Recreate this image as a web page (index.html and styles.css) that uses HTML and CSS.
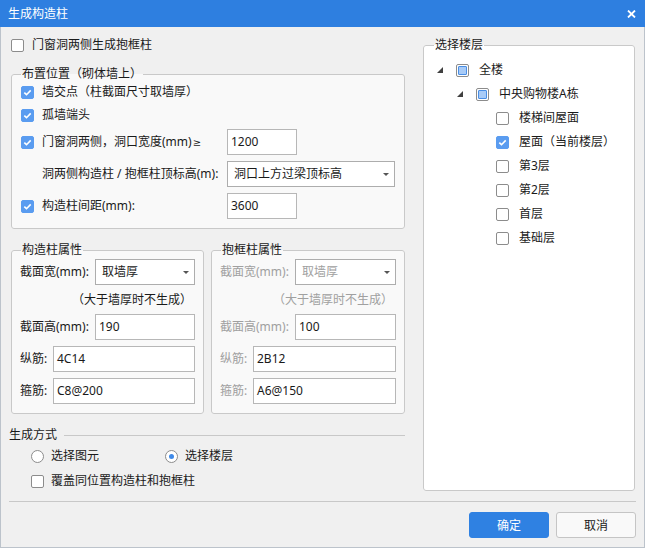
FILE: index.html
```html
<!DOCTYPE html>
<html lang="zh-CN">
<head>
<meta charset="utf-8">
<title>生成构造柱</title>
<link rel="stylesheet" href="styles.css">
</head>
<body>
<div class="titlebar">
  <span class="title">生成构造柱</span>
  <svg class="close" width="9" height="8" viewBox="0 0 9 8"><path d="M1 0.5 L8 7.5 M8 0.5 L1 7.5" stroke="#fff" stroke-width="1.8" fill="none"/></svg>
</div>
<div class="dlg">
  <div class="main">
    <div class="left">
      <div class="crow top-row"><span class="cb"></span><span>门窗洞两侧生成抱框柱</span></div>

      <fieldset class="group g-layout">
        <legend>布置位置（砌体墙上）</legend>
        <div class="lrow r1"><div class="lcell"><span class="cb on"><svg viewBox="0 0 13 13"><path d="M3.3 6.6 L5.5 8.7 L9.7 4.4" stroke="#fff" stroke-width="1.6" fill="none"/></svg></span><span>墙交点（柱截面尺寸取墙厚）</span></div></div>
        <div class="lrow r2"><div class="lcell"><span class="cb on"><svg viewBox="0 0 13 13"><path d="M3.3 6.6 L5.5 8.7 L9.7 4.4" stroke="#fff" stroke-width="1.6" fill="none"/></svg></span><span>孤墙端头</span></div></div>
        <div class="lrow r3"><div class="lcell"><span class="cb on"><svg viewBox="0 0 13 13"><path d="M3.3 6.6 L5.5 8.7 L9.7 4.4" stroke="#fff" stroke-width="1.6" fill="none"/></svg></span><span>门窗洞两侧，洞口宽度(mm)<span class="ge">≥</span></span></div><div class="input w70">1200</div></div>
        <div class="lrow r4"><div class="lcell indent"><span>洞两侧构造柱 / 抱框柱顶标高(m):</span></div><div class="select w168"><span>洞口上方过梁顶标高</span><span class="arrow"></span></div></div>
        <div class="lrow r5"><div class="lcell"><span class="cb on"><svg viewBox="0 0 13 13"><path d="M3.3 6.6 L5.5 8.7 L9.7 4.4" stroke="#fff" stroke-width="1.6" fill="none"/></svg></span><span>构造柱间距(mm):</span></div><div class="input w70">3600</div></div>
      </fieldset>

      <div class="props">
        <fieldset class="group g-prop">
          <legend>构造柱属性</legend>
          <div class="prow"><span class="lbl">截面宽(mm):</span><div class="select grow"><span>取墙厚</span><span class="arrow"></span></div></div>
          <div class="note">（大于墙厚时不生成）</div>
          <div class="prow"><span class="lbl">截面高(mm):</span><div class="input grow">190</div></div>
          <div class="prow gap"><span class="lbl short">纵筋:</span><div class="input grow">4C14</div></div>
          <div class="prow gap"><span class="lbl short">箍筋:</span><div class="input grow">C8@200</div></div>
        </fieldset>
        <fieldset class="group g-prop dis">
          <legend>抱框柱属性</legend>
          <div class="prow"><span class="lbl">截面宽(mm):</span><div class="select grow"><span>取墙厚</span><span class="arrow"></span></div></div>
          <div class="note">（大于墙厚时不生成）</div>
          <div class="prow"><span class="lbl">截面高(mm):</span><div class="input grow">100</div></div>
          <div class="prow gap"><span class="lbl short">纵筋:</span><div class="input grow">2B12</div></div>
          <div class="prow gap"><span class="lbl short">箍筋:</span><div class="input grow">A6@150</div></div>
        </fieldset>
      </div>

      <div class="method"><span class="mlabel">生成方式</span><span class="mline"></span></div>
      <div class="radios">
        <div class="ropt"><span class="rb"></span><span>选择图元</span></div>
        <div class="ropt"><span class="rb on"></span><span>选择楼层</span></div>
      </div>
      <div class="crow cover"><span class="cb"></span><span>覆盖同位置构造柱和抱框柱</span></div>
    </div>

    <div class="right">
      <fieldset class="group g-tree">
        <legend>选择楼层</legend>
        <div class="trow lv0"><span class="exp"><svg width="6" height="6" viewBox="0 0 6 6"><path d="M6 0 L6 6 L0 6 Z" fill="#404040"/></svg></span><span class="cb partial"><span class="pm"></span></span><span>全楼</span></div>
        <div class="trow lv1"><span class="exp"><svg width="6" height="6" viewBox="0 0 6 6"><path d="M6 0 L6 6 L0 6 Z" fill="#404040"/></svg></span><span class="cb partial"><span class="pm"></span></span><span>中央购物楼A栋</span></div>
        <div class="trow lv2"><span class="exp"></span><span class="cb"></span><span>楼梯间屋面</span></div>
        <div class="trow lv2"><span class="exp"></span><span class="cb on"><svg viewBox="0 0 13 13"><path d="M3.3 6.6 L5.5 8.7 L9.7 4.4" stroke="#fff" stroke-width="1.6" fill="none"/></svg></span><span>屋面（当前楼层）</span></div>
        <div class="trow lv2"><span class="exp"></span><span class="cb"></span><span>第3层</span></div>
        <div class="trow lv2"><span class="exp"></span><span class="cb"></span><span>第2层</span></div>
        <div class="trow lv2"><span class="exp"></span><span class="cb"></span><span>首层</span></div>
        <div class="trow lv2"><span class="exp"></span><span class="cb"></span><span>基础层</span></div>
      </fieldset>
    </div>
  </div>
  <div class="sep"></div>
  <div class="footer">
    <button class="btn primary">确定</button>
    <button class="btn">取消</button>
  </div>
</div>
</body>
</html>
```

FILE: styles.css
```css
* { box-sizing: border-box; }
html, body { margin: 0; padding: 0; }
body {
  width: 645px;
  height: 548px;
  overflow: hidden;
  font-family: "Noto Sans", "Noto Sans CJK SC", sans-serif;
  font-size: 12px;
  line-height: 16px;
  color: #1a1a1a;
  background: #f0f0f0;
}
.titlebar {
  height: 27px;
  background: #2e7fe0;
  color: #fff;
  display: flex;
  align-items: center;
  padding: 0 9px 0 8px;
}
.title { flex: 1; font-size: 12px; }
.close { display: block; margin-top: 1px; }

.dlg {
  height: 521px;
  border: 1px solid #bcc3cb;
  border-top: 0;
  display: flex;
  flex-direction: column;
}
.main {
  display: flex;
  gap: 18px;
  height: 464px;
  padding: 0 9px 0 10px;
}
.left { width: 394px; display: flex; flex-direction: column; }
.right { width: 212px; }

/* checkbox / radio */
.cb {
  width: 13px; height: 13px;
  flex: none;
  border: 1px solid #8c8c8c;
  border-radius: 2px;
  background: #fff;
  display: flex; align-items: center; justify-content: center;
}
.cb svg { width: 13px; height: 13px; display: block; flex: none; }
.cb.on { background: #5a9cf0; border-color: #5a9cf0; }
.cb.partial .pm {
  width: 9px; height: 9px;
  background: #a8cbf7;
  border: 1px solid #4a8ee4;
  border-radius: 1px;
}
.rb {
  width: 13px; height: 13px;
  flex: none;
  border: 1px solid #8c8c8c;
  border-radius: 50%;
  background: #fff;
  display: flex; align-items: center; justify-content: center;
}
.rb.on::after {
  content: "";
  width: 5px; height: 5px;
  border-radius: 50%;
  background: #3f8ae8;
}

.crow { display: flex; align-items: center; gap: 8px; height: 16px; }
.top-row { margin-top: 10px; }

/* group boxes */
.group {
  margin: 0;
  border: 1px solid #c9c9c9;
  border-radius: 3px;
  background: #f9f9f9;
  min-width: 0;
}
.group legend { padding: 0 1px; line-height: 16px; }

.g-layout { margin-top: 13px; padding: 0 8px 9px 9px; }
.lrow { display: grid; grid-template-columns: 206px auto; align-items: center; }
.lcell { display: flex; align-items: center; gap: 8px; }
.lcell.indent { padding-left: 21px; }
.ge { font-family: "DejaVu Sans", sans-serif; font-size: 10px; margin-left: 1px; }
.r1 { height: 20px; margin-bottom: 3px; }
.r2 { height: 20px; margin-bottom: 4px; }
.r3, .r4 { height: 26px; margin-bottom: 6px; }
.r5 { height: 26px; }

.input {
  height: 26px;
  border: 1px solid #b7b7b7;
  background: #fff;
  display: flex; align-items: center;
  padding-left: 3px;
  color: #1a1a1a;
}
.select {
  height: 26px;
  border: 1px solid #adadad;
  background: #fff;
  display: flex; align-items: center;
  padding: 0 5px 0 6px;
}
.select .arrow {
  margin-left: auto;
  width: 0; height: 0;
  border-left: 3px solid transparent;
  border-right: 3px solid transparent;
  border-top: 3px solid #555;
}
.w70 { width: 70px; }
.w168 { width: 168px; }
.grow { flex: 1; }

.props {
  display: grid;
  grid-template-columns: 193px 194px;
  gap: 7px;
  margin-top: 13px;
}
.g-prop { padding: 1px 8px 9px 8px; }
.g-prop legend { margin-left: 1px; }
.prow { display: flex; align-items: center; height: 26px; }
.prow.gap { margin-top: 6px; }
.lbl { width: 75px; flex: none; }
.lbl.short { width: 33px; }
.note { height: 20px; margin: 5px 0 4px; text-align: right; padding-right: 3px; line-height: 20px; }
.dis .lbl, .dis .note, .dis .select span:first-child { color: #a0a0a0; }

.method { display: flex; align-items: center; height: 16px; margin-top: 13px; margin-left: -2px; }
.mline { flex: 1; height: 1px; background: #c8c8c8; margin-left: 7px; }
.radios { display: flex; height: 16px; margin-top: 5px; padding-left: 20px; }
.ropt { display: flex; align-items: center; gap: 7px; width: 134px; }
.cover { margin-top: 9px; padding-left: 20px; gap: 7px; }

/* tree */
.g-tree {
  margin-top: 10px;
  height: 454px;
  padding: 5px 0 0 0;
  background: #fff;
}
.g-tree legend { margin-left: 10px; }
.trow { display: flex; align-items: center; height: 24px; }
.exp { width: 6px; height: 6px; flex: none; margin-right: 13px; display: flex; }
.trow .cb { margin-right: 10px; }
.lv0 { padding-left: 13px; }
.lv1 { padding-left: 33px; }
.lv2 { padding-left: 53px; }

.sep { margin: 10px 8px 0 8px; height: 1px; background: #c8c8c8; }
.footer {
  display: flex;
  justify-content: flex-end;
  gap: 7px;
  margin-top: 10px;
  padding-right: 8px;
}
.btn {
  width: 80px; height: 26px;
  border-radius: 3px;
  border: 1px solid #c5c5c5;
  background: #f9f9f9;
  font-family: inherit;
  font-size: 12px;
  color: #1a1a1a;
  padding: 0;
}
.btn.primary { background: #2f81e2; border-color: #2f81e2; color: #fff; }
```
